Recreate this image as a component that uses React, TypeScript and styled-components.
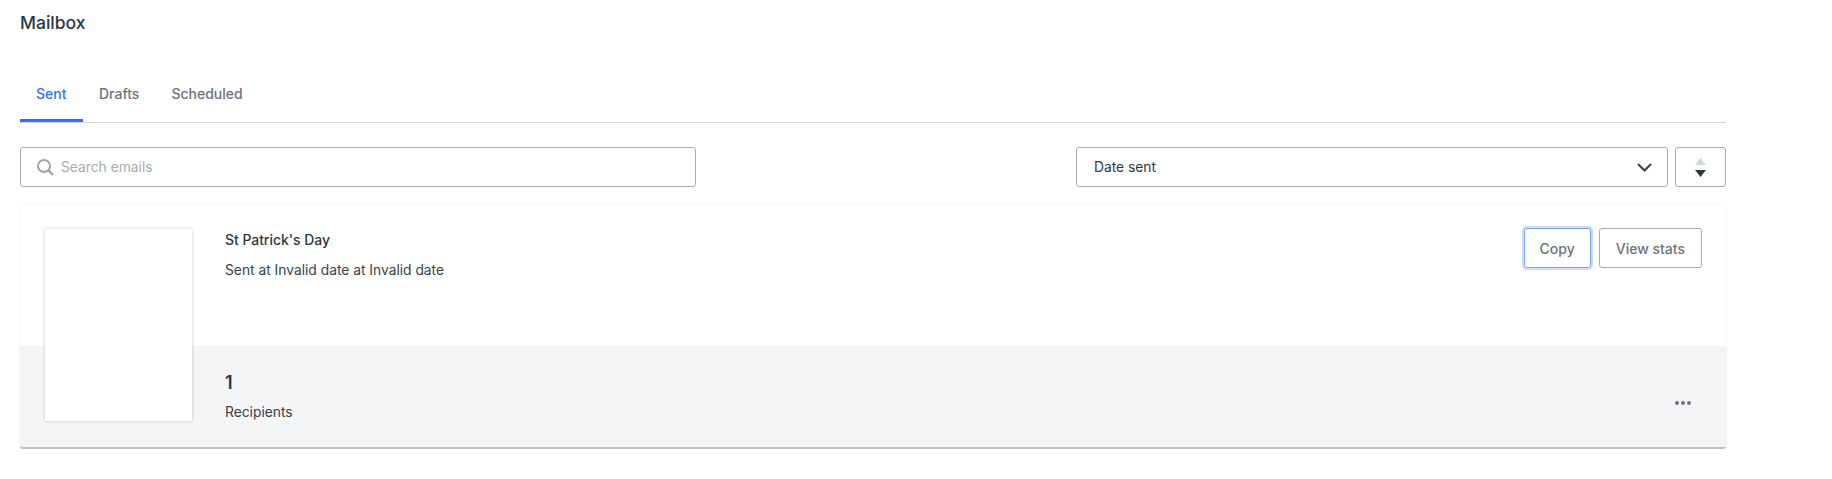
import styled, { createGlobalStyle } from 'styled-components'

const GlobalStyle = createGlobalStyle`
  html, body {
    margin: 0;
    background: #fff;
    font-family: Inter, 'Liberation Sans', sans-serif;
    color: #2d3540;
  }
`

const Page = styled.div`
  width: 1706px;
  padding: 14px 0 0 20px;
`

const Title = styled.h1`
  margin: 0;
  font-size: 17.5px;
  line-height: 18px;
  font-weight: 500;
  color: #2d3540;
`

const Tabs = styled.div`
  display: flex;
  margin-top: 40px;
  height: 50px;
  border-bottom: 1px solid #d4d7da;
`

const Tab = styled.div<{ $active?: boolean }>`
  padding: 13px 16px 0;
  min-width: ${p => (p.$active ? '63px' : '0')};
  height: 50px;
  box-sizing: border-box;
  font-size: 14px;
  line-height: 18px;
  font-weight: 500;
  color: ${p => (p.$active ? '#2f6fff' : '#6e7279')};
  border-bottom: ${p => (p.$active ? '3px solid #2f6fff' : 'none')};
`

const Toolbar = styled.div`
  display: flex;
  align-items: center;
  margin-top: 24px;
`

const SearchBox = styled.div`
  display: flex;
  align-items: center;
  width: 676px;
  height: 40px;
  box-sizing: border-box;
  padding-left: 16px;
  gap: 7px;
  border: 1px solid #a9abae;
  border-radius: 3px;
  font-size: 13.8px;
  color: #a9abae;
`

const SortSelect = styled.div`
  display: flex;
  align-items: center;
  justify-content: space-between;
  width: 592px;
  height: 40px;
  margin-left: auto;
  box-sizing: border-box;
  padding: 0 15px 0 17px;
  border: 1px solid #a9abae;
  border-radius: 3px;
  font-size: 13.8px;
  color: #2d3540;
`

const OrderButton = styled.div`
  display: flex;
  flex-direction: column;
  align-items: center;
  justify-content: center;
  gap: 5px;
  width: 51px;
  height: 40px;
  margin-left: 7px;
  box-sizing: border-box;
  border: 1px solid #a9abae;
  border-radius: 3px;
`

const Card = styled.div`
  display: grid;
  grid-template-columns: 208px 1fr;
  grid-template-rows: 141px 103px;
  margin-top: 18px;
  border-radius: 3px;
  box-shadow: 0 0 2px rgba(0, 0, 0, 0.12);
`

const TopRow = styled.div`
  grid-column: 1 / 3;
  grid-row: 1;
  display: flex;
  justify-content: space-between;
  padding: 23px 24px 0 205px;
  background: #fff;
  border-radius: 3px 3px 0 0;
`

const BottomRow = styled.div`
  grid-column: 1 / 3;
  grid-row: 2;
  display: flex;
  justify-content: space-between;
  align-items: flex-start;
  box-sizing: border-box;
  padding: 26px 35px 0 205px;
  background: #f4f5f7;
  border-bottom: 2px solid #bfc1c4;
  border-radius: 0 0 3px 3px;
`

const Preview = styled.div`
  grid-column: 1;
  grid-row: 1 / 3;
  z-index: 1;
  width: 147px;
  height: 192px;
  margin: 24px 0 0 25px;
  background: #fff;
  box-shadow: 0 0 3px rgba(0, 0, 0, 0.22);
`

const Name = styled.div`
  margin-top: 3px;
  font-size: 13.9px;
  line-height: 18px;
  font-weight: 500;
`

const Meta = styled.div`
  margin-top: 12px;
  font-size: 13.8px;
  line-height: 18px;
  color: #3a414b;
`

const Count = styled.div`
  font-size: 18px;
  line-height: 22px;
  font-weight: 600;
`

const RecipientsLabel = styled(Meta)`
  margin-top: 9px;
`

const Actions = styled.div`
  display: flex;
  gap: 8px;
`

const ActionButton = styled.button<{ $focused?: boolean }>`
  height: 40px;
  padding: 0 ${p => (p.$focused ? '15px' : '16px')};
  background: #fff;
  border: 1px solid ${p => (p.$focused ? '#7aa2ff' : '#a9abae')};
  border-radius: 3px;
  box-shadow: ${p => (p.$focused ? '0 0 0 2px #cfdcff' : 'none')};
  font-family: inherit;
  font-size: 14px;
  font-weight: 500;
  color: #6e7279;
`

const MoreDots = styled.div`
  display: flex;
  gap: 2px;
  margin-top: 29px;
`

const Dot = styled.span`
  width: 4px;
  height: 4px;
  border-radius: 50%;
  background: #6e7279;
`

export default function App() {
  return (
    <>
      <GlobalStyle />
      <Page>
        <Title>Mailbox</Title>
        <Tabs>
          <Tab $active>Sent</Tab>
          <Tab>Drafts</Tab>
          <Tab>Scheduled</Tab>
        </Tabs>
        <Toolbar>
          <SearchBox>
            <svg width="17" height="17" viewBox="0 0 17 17" fill="none" stroke="#a0a3a7">
              <circle cx="7" cy="7" r="6" strokeWidth="2" />
              <path d="M11.2 11.2 16 16" strokeWidth="2.4" />
            </svg>
            Search emails
          </SearchBox>
          <SortSelect>
            Date sent
            <svg width="15" height="9" viewBox="0 0 15 9" fill="none" stroke="#3a414b" strokeWidth="2">
              <path d="M1 1l6.5 6.5L14 1" />
            </svg>
          </SortSelect>
          <OrderButton>
            <svg width="11" height="7" viewBox="0 0 11 7"><path d="M5.5 0 11 7H0z" fill="#d4d7da" /></svg>
            <svg width="11" height="7" viewBox="0 0 11 7"><path d="M0 0h11L5.5 7z" fill="#2d3540" /></svg>
          </OrderButton>
        </Toolbar>
        <Card>
          <TopRow>
            <div>
              <Name>St Patrick's Day</Name>
              <Meta>Sent at Invalid date at Invalid date</Meta>
            </div>
            <Actions>
              <ActionButton $focused>Copy</ActionButton>
              <ActionButton>View stats</ActionButton>
            </Actions>
          </TopRow>
          <BottomRow>
            <div>
              <Count>1</Count>
              <RecipientsLabel>Recipients</RecipientsLabel>
            </div>
            <MoreDots>
              <Dot />
              <Dot />
              <Dot />
            </MoreDots>
          </BottomRow>
          <Preview />
        </Card>
      </Page>
    </>
  )
}
